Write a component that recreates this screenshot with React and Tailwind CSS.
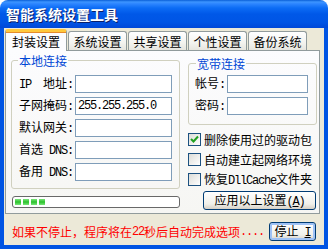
import React from 'react';

function Ascii({ children }) {
  return <span className="font-['Liberation_Mono',monospace] tracking-[-1.2px]">{children}</span>;
}

function TextBox({ width, value }) {
  return (
    <div className={`h-[18px] border border-[#7f9db9] bg-white pl-[2px] flex items-center ${width}`}>
      {value && <Ascii>{value}</Ascii>}
    </div>
  );
}

function CheckBox({ checked, children }) {
  return (
    <div className="flex items-center h-[13px]">
      <div className="w-[13px] h-[13px] border border-[#1c5180] bg-[linear-gradient(135deg,#dcdcd7,#ffffff)] flex items-center justify-center">
        {checked && (
          <svg width="9" height="9" viewBox="0 0 9 9">
            <path d="M1 4 L3.5 6.5 L8 1.5" stroke="#21a121" strokeWidth="2" fill="none" />
          </svg>
        )}
      </div>
      <span className="ml-[3px] leading-[13px]">{children}</span>
    </div>
  );
}

function XpButton({ className, children, focused }) {
  return (
    <div
      className={`flex items-center justify-center border border-[#003c74] rounded-[3px] bg-[linear-gradient(to_bottom,#ffffff,#f0f0ea_70%,#d6d0c5)] ${
        focused ? 'shadow-[inset_0_0_0_2px_#9fc2f5]' : ''
      } ${className}`}
    >
      {children}
    </div>
  );
}

const tabs = ['系统设置', '共享设置', '个性设置', '备份系统'];

export default function App() {
  return (
    <div className="w-[328px] h-[249px] flex flex-col bg-white font-['Noto_Sans_CJK_SC',sans-serif] text-[12px] leading-[14px] text-black">
      {/* Title bar */}
      <div className="h-[28px] rounded-t-[8px] bg-[linear-gradient(to_bottom,#0a5fd8_0px,#3d95ff_2px,#2b84ff_4px,#0c6cf5_8px,#0058e8_14px,#0055e5_22px,#0048d8_28px)] flex items-center pl-[6px]">
        <span className="text-white font-bold text-[14px] leading-[14px] [text-shadow:1px_1px_0_#0a1f6a]">智能系统设置工具</span>
      </div>

      {/* Frame */}
      <div className="flex-1 flex bg-[#0054e3] px-[4px] pb-[4px]">
        <div className="flex-1 flex flex-col bg-[#ece9d8]">
          {/* Tabs */}
          <div className="flex items-end h-[21px] mt-[1px] ml-[1px] gap-[1px]">
            <div className="relative z-10 h-[22px] mb-[-1px] w-[62px] flex items-center justify-center bg-[#fcfcfe] border-x border-[#919b9c] border-t-[3px] border-t-[#ffc83c] rounded-t-[3px] shadow-[inset_0_1px_0_#e68b2c]">
              <span>封装设置</span>
            </div>
            {tabs.map((t) => (
              <div
                key={t}
                className="h-[19px] w-[59px] flex items-center justify-center border-x border-t border-[#919b9c] rounded-t-[3px] bg-[linear-gradient(to_bottom,#ffffff,#f3f3ef_60%,#e6e5de)]"
              >
                <span className="mt-[2px]">{t}</span>
              </div>
            ))}
          </div>

          {/* Pane */}
          <div className="ml-[1px] w-[315px] h-[164px] border border-[#919b9c] bg-[linear-gradient(to_bottom,#fcfcfe,#f6f6f3)] flex">
            {/* Left column */}
            <div className="ml-[5px] w-[169px] flex flex-col">
              <fieldset className="mt-[3px] border border-[#d0d0bf] rounded-[3px] pl-[7px] pb-[7px]">
                <legend className="ml-[-1px] px-[1px] leading-[13px] text-[#0046d5]">本地连接</legend>
                <div className="pt-[8px] flex flex-col gap-[4px]">
                  <div className="flex items-center">
                    <span className="w-[56px]"><Ascii>IP&nbsp;&nbsp;</Ascii>地址<Ascii>:</Ascii></span>
                    <TextBox width="w-[97px]" />
                  </div>
                  <div className="flex items-center">
                    <span className="w-[56px]">子网掩码<Ascii>:</Ascii></span>
                    <TextBox width="w-[97px]" value="255.255.255.0" />
                  </div>
                  <div className="flex items-center">
                    <span className="w-[56px]">默认网关<Ascii>:</Ascii></span>
                    <TextBox width="w-[97px]" />
                  </div>
                  <div className="flex items-center">
                    <span className="w-[56px]">首选<Ascii>&nbsp;DNS:</Ascii></span>
                    <TextBox width="w-[97px]" />
                  </div>
                  <div className="flex items-center">
                    <span className="w-[56px]">备用<Ascii>&nbsp;DNS:</Ascii></span>
                    <TextBox width="w-[97px]" />
                  </div>
                </div>
              </fieldset>

              {/* Progress */}
              <div className="mt-[7px] ml-[1px] w-[168px] h-[12px] border border-[#686868] rounded-[3px] bg-white flex items-center gap-[2px] pl-[2px]">
                {[0, 1, 2, 3].map((i) => (
                  <div key={i} className="w-[6px] h-[6px] bg-[linear-gradient(to_bottom,#7be57b,#2bc22b,#7be57b)]" />
                ))}
              </div>
            </div>

            {/* Right column */}
            <div className="ml-[8px] w-[129px] flex flex-col">
              <fieldset className="mt-[6px] border border-[#d0d0bf] rounded-[3px] pl-[6px] pb-[9px]">
                <legend className="ml-[1px] px-[1px] leading-[13px] text-[#0046d5]">宽带连接</legend>
                <div className="pt-[5px] flex flex-col gap-[4px]">
                  <div className="flex items-center">
                    <span className="w-[32px]">帐号<Ascii>:</Ascii></span>
                    <TextBox width="w-[81px]" />
                  </div>
                  <div className="flex items-center">
                    <span className="w-[32px]">密码<Ascii>:</Ascii></span>
                    <TextBox width="w-[81px]" />
                  </div>
                </div>
              </fieldset>

              <div className="mt-[8px] flex flex-col gap-[7px]">
                <CheckBox checked>删除使用过的驱动包</CheckBox>
                <CheckBox>自动建立起网络环境</CheckBox>
                <CheckBox>恢复<Ascii>DllCache</Ascii>文件夹</CheckBox>
              </div>

              <XpButton className="mt-[5px] ml-[15px] w-[113px] h-[19px]">
                <span>应用以上设置<Ascii>(<u>A</u>)</Ascii></span>
              </XpButton>
            </div>
          </div>

          {/* Bottom status */}
          <div className="flex-1 flex items-start justify-between pl-[8px] pr-[8px] pt-[8px]">
            <div className="h-[20px] flex items-center text-[#ff0000]">
              如果不停止，程序将在<Ascii>22</Ascii>秒后自动完成选项<Ascii>....</Ascii>
            </div>
            <XpButton focused className="w-[47px] h-[19px]">
              <span>停止<Ascii>&nbsp;<u>I</u></Ascii></span>
            </XpButton>
          </div>
        </div>
      </div>
    </div>
  );
}
